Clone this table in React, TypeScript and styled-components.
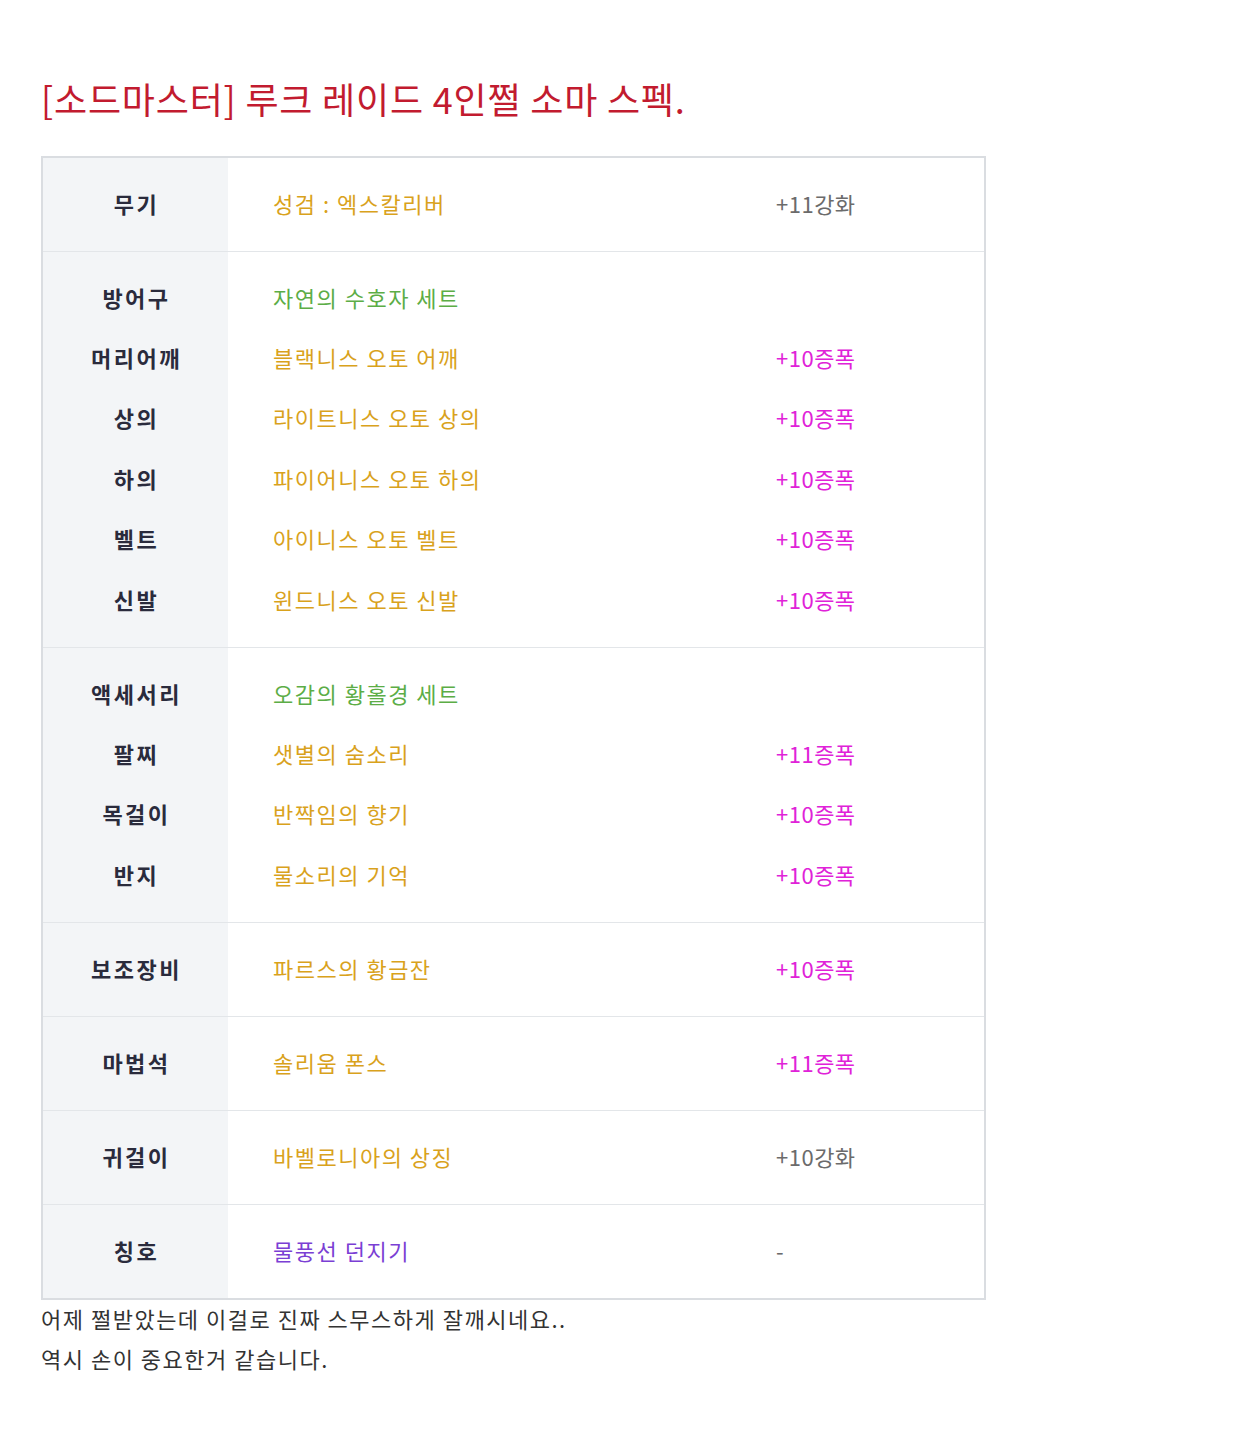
import React from "react";
import styled, { createGlobalStyle } from "styled-components";

const Global = createGlobalStyle`
  html, body { margin: 0; padding: 0; background: #ffffff; }
  body { font-family: "Noto Sans CJK KR", "Noto Sans", sans-serif; }
  * { box-sizing: border-box; }
`;

const Page = styled.div`
  padding: 78px 0 40px 41px;
  width: 986px;
`;

const Title = styled.h1`
  margin: 0 0 38px 0;
  font-size: 36px;
  line-height: 40px;
  font-weight: 400;
  color: #c21b2f;
  letter-spacing: 0.8px;
  white-space: nowrap;
`;

const Table = styled.div`
  width: 945px;
  border: 2px solid #dadde1;
  display: flex;
  flex-direction: column;
`;

const Section = styled.div<{ $last?: boolean }>`
  display: grid;
  grid-template-columns: 185px 1fr;
  border-bottom: ${(p) => (p.$last ? "none" : "1px solid #e3e6e9")};
`;

const LabelCol = styled.div`
  background: #f3f5f7;
  padding: 16px 0 16.6px;
  display: flex;
  flex-direction: column;
`;

const ValueCol = styled.div`
  padding: 16px 0 16.6px 45px;
  display: flex;
  flex-direction: column;
`;

const Label = styled.div`
  height: 60.4px;
  display: flex;
  align-items: center;
  justify-content: center;
  padding: 0 0 3px 2px;
  font-size: 22px;
  font-weight: 700;
  color: #2a2b3c;
  letter-spacing: 2.5px;
`;

const ValueRow = styled.div`
  height: 60.4px;
  padding-bottom: 3px;
  display: grid;
  grid-template-columns: 503px 1fr;
  align-items: center;
  font-size: 22px;
`;

const Name = styled.span<{ $tone: string }>`
  color: ${(p) => p.$tone};
  letter-spacing: 1.5px;
`;

const Extra = styled.span<{ $tone: string }>`
  color: ${(p) => p.$tone};
  letter-spacing: 0.5px;
`;

const Note = styled.p`
  margin: 0;
  padding-bottom: 3px;
  font-size: 22px;
  line-height: 37px;
  color: #333333;
  letter-spacing: 1.5px;
  white-space: nowrap;
`;

const GOLD = "#d9a21c";
const GREEN = "#5cad46";
const PURPLE = "#7b3fd4";
const PINK = "#e022d8";
const GRAY = "#6b6b6b";

type Row = { label: string; name: string; nameTone: string; extra?: string; extraTone?: string };

const sections: Row[][] = [
  [{ label: "무기", name: "성검 : 엑스칼리버", nameTone: GOLD, extra: "+11강화", extraTone: GRAY }],
  [
    { label: "방어구", name: "자연의 수호자 세트", nameTone: GREEN },
    { label: "머리어깨", name: "블랙니스 오토 어깨", nameTone: GOLD, extra: "+10증폭", extraTone: PINK },
    { label: "상의", name: "라이트니스 오토 상의", nameTone: GOLD, extra: "+10증폭", extraTone: PINK },
    { label: "하의", name: "파이어니스 오토 하의", nameTone: GOLD, extra: "+10증폭", extraTone: PINK },
    { label: "벨트", name: "아이니스 오토 벨트", nameTone: GOLD, extra: "+10증폭", extraTone: PINK },
    { label: "신발", name: "윈드니스 오토 신발", nameTone: GOLD, extra: "+10증폭", extraTone: PINK },
  ],
  [
    { label: "액세서리", name: "오감의 황홀경 세트", nameTone: GREEN },
    { label: "팔찌", name: "샛별의 숨소리", nameTone: GOLD, extra: "+11증폭", extraTone: PINK },
    { label: "목걸이", name: "반짝임의 향기", nameTone: GOLD, extra: "+10증폭", extraTone: PINK },
    { label: "반지", name: "물소리의 기억", nameTone: GOLD, extra: "+10증폭", extraTone: PINK },
  ],
  [{ label: "보조장비", name: "파르스의 황금잔", nameTone: GOLD, extra: "+10증폭", extraTone: PINK }],
  [{ label: "마법석", name: "솔리움 폰스", nameTone: GOLD, extra: "+11증폭", extraTone: PINK }],
  [{ label: "귀걸이", name: "바벨로니아의 상징", nameTone: GOLD, extra: "+10강화", extraTone: GRAY }],
  [{ label: "칭호", name: "물풍선 던지기", nameTone: PURPLE, extra: "-", extraTone: GRAY }],
];

export default function App() {
  return (
    <>
      <Global />
      <Page>
        <Title>[소드마스터] 루크 레이드 4인쩔 소마 스펙.</Title>
        <Table>
          {sections.map((rows, i) => (
            <Section key={i} $last={i === sections.length - 1}>
              <LabelCol>
                {rows.map((r) => (
                  <Label key={r.label}>{r.label}</Label>
                ))}
              </LabelCol>
              <ValueCol>
                {rows.map((r) => (
                  <ValueRow key={r.label}>
                    <Name $tone={r.nameTone}>{r.name}</Name>
                    {r.extra ? <Extra $tone={r.extraTone || GRAY}>{r.extra}</Extra> : <span />}
                  </ValueRow>
                ))}
              </ValueCol>
            </Section>
          ))}
        </Table>
        <Note>어제 쩔받았는데 이걸로 진짜 스무스하게 잘깨시네요..</Note>
        <Note>역시 손이 중요한거 같습니다.</Note>
      </Page>
    </>
  );
}
